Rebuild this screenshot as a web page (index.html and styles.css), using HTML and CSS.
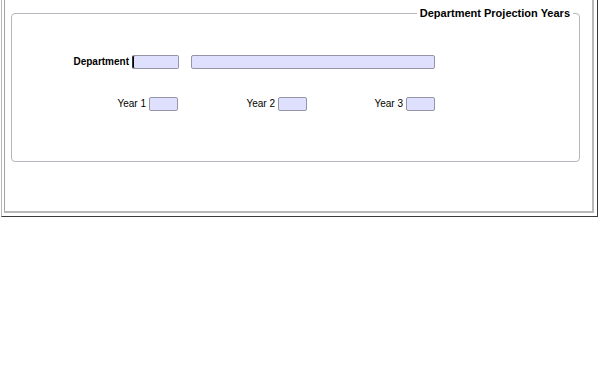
FILE: index.html
```html
<!DOCTYPE html>
<html>
<head>
<meta charset="utf-8">
<link rel="stylesheet" href="styles.css">
</head>
<body>
<div class="outer">
  <div class="panel">
    <fieldset class="group">
      <legend class="group-title">Department Projection Years</legend>
      <div class="row dept-row">
        <span class="label bold dept-label">Department</span>
        <span class="field focus w-code"></span>
        <span class="field w-name"></span>
      </div>
      <div class="row year-row">
        <div class="cell c1"><span class="label">Year 1</span><span class="field w-year"></span></div>
        <div class="cell c2"><span class="label">Year 2</span><span class="field w-year"></span></div>
        <div class="cell c3"><span class="label">Year 3</span><span class="field w-year"></span></div>
      </div>
    </fieldset>
  </div>
</div>
</body>
</html>
```

FILE: styles.css
```css
html, body {
  margin: 0;
  padding: 0;
  background: #ffffff;
  font-family: "Liberation Sans", Arial, sans-serif;
  color: #000;
}

.outer {
  margin-left: 1px;
  width: 590px;
  border-left: 1px solid #b8b8b8;
  border-right: 1px solid #3a3a3a;
  border-bottom: 1px solid #3a3a3a;
  padding: 0 3px 3px 2px;
  background: #ffffff;
}

.panel {
  border-left: 1px solid #a4a4a4;
  border-right: 2px solid #b8b8b8;
  border-bottom: 2px solid #b8b8b8;
  padding: 7px 12px 49px 6px;
}

.group {
  margin: 0;
  padding: 0;
  border: 1px solid #b4b8bc;
  border-radius: 4px;
  height: 155px;
  box-sizing: border-box;
}

.group-title {
  margin-left: auto;
  margin-right: 6px;
  padding: 0 3px;
  font-size: 11px;
  font-weight: bold;
  line-height: 13px;
}

.row {
  display: flex;
  align-items: center;
}

.dept-row {
  margin-top: 35px;
}

.year-row {
  margin-top: 28px;
}

.label {
  font-size: 10px;
  line-height: 14px;
  margin-right: 3px;
}

.bold {
  font-weight: bold;
}

.dept-label {
  width: 117px;
  text-align: right;
}

.field {
  display: block;
  height: 14px;
  box-sizing: border-box;
  background: #dfe0fd;
  border: 1px solid #9496a8;
  border-radius: 2px;
}

.focus {
  box-shadow: inset 1px 0 0 #000;
  border-left-color: #333;
}

.w-code { width: 47px; }
.w-name { width: 244px; margin-left: 12px; }
.w-year { width: 29px; }

.cell {
  display: flex;
  justify-content: flex-end;
  align-items: center;
}

.c1 { width: 166px; }
.c2 { width: 129px; }
.c3 { width: 128px; }
```
